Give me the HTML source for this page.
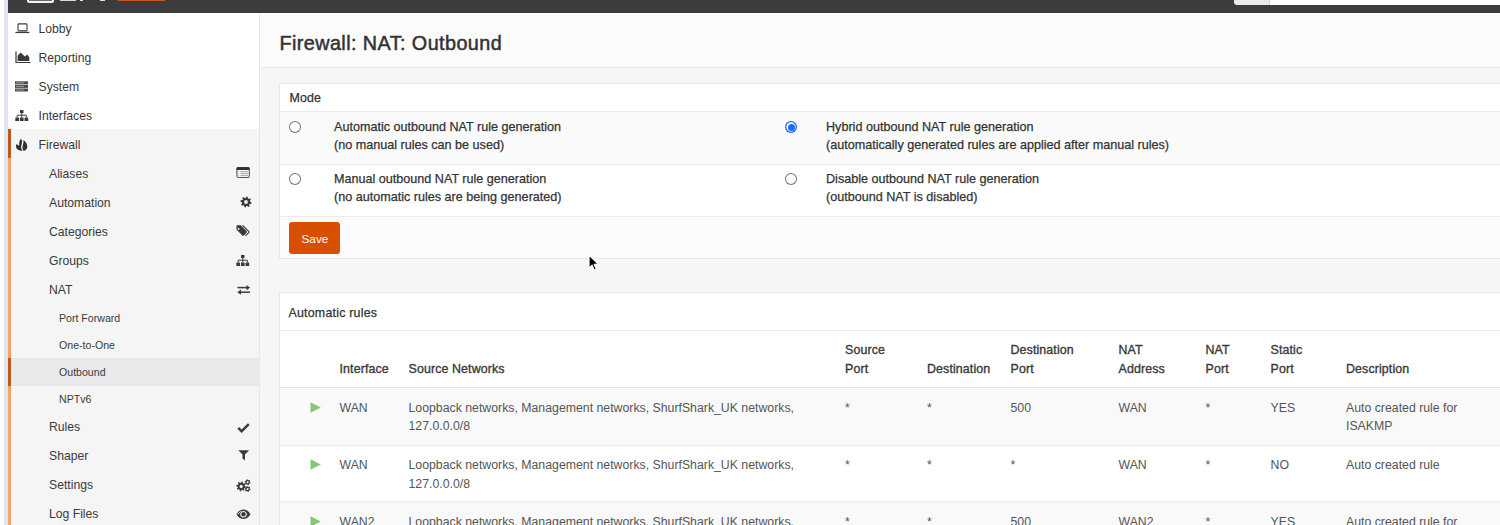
<!DOCTYPE html>
<html><head><meta charset="utf-8"><style>
html,body{margin:0;padding:0;width:1500px;height:525px;overflow:hidden;background:#fff;}
body{position:relative;font-family:"Liberation Sans",sans-serif;}
.t{position:absolute;white-space:nowrap;}
.r{position:absolute;}
</style></head><body>
<div class="r" style="left:0px;top:0px;width:1500px;height:525px;background:#fff;"></div>
<div class="r" style="left:3.5px;top:0px;width:4.5px;height:525px;background:#dde5ee;"></div>
<div class="r" style="left:260px;top:12px;width:1240px;height:55px;background:#fbfbfb;"></div>
<div class="r" style="left:260px;top:67px;width:1240px;height:1px;background:#ebebeb;"></div>
<div class="r" style="left:260px;top:68px;width:1240px;height:457px;background:#f6f6f6;"></div>
<div class="r" style="left:259px;top:12px;width:1px;height:513px;background:#e6e6e6;"></div>
<div class="r" style="left:8px;top:0px;width:1492px;height:12.6px;background:#3c3c3c;"></div>
<div class="r" style="left:27px;top:0px;width:27px;height:2.5px;background:#f2f2f2;border-radius:0 0 2px 2px;"></div>
<div class="r" style="left:29px;top:0px;width:23px;height:1px;background:#6a6a6a;"></div>
<div class="r" style="left:60px;top:0px;width:16px;height:1.2px;background:#d8d8d8;"></div>
<div class="r" style="left:80px;top:0px;width:3px;height:1.2px;background:#e0e0e0;"></div>
<div class="r" style="left:100px;top:0px;width:5px;height:1.2px;background:#e0e0e0;"></div>
<div class="r" style="left:118px;top:0px;width:47px;height:1.2px;background:#c85a20;"></div>
<div class="r" style="left:1233.5px;top:0px;width:36px;height:4.5px;background:#ebebeb;border-radius:0 0 0 3px;"></div>
<div class="r" style="left:1269.5px;top:0px;width:230.5px;height:4.5px;background:#ffffff;"></div>
<div class="r" style="left:1269px;top:0px;width:0.8px;height:4.5px;background:#cfcfcf;"></div>
<div class="r" style="left:8px;top:129px;width:251px;height:396px;background:#f5f5f5;"></div>
<div class="r" style="left:8px;top:129px;width:3px;height:29px;background:#c4561c;"></div>
<div class="r" style="left:8px;top:158px;width:3px;height:367px;background:#f4a36b;"></div>
<div class="r" style="left:11px;top:358px;width:248px;height:28px;background:#e9e9e9;"></div>
<div class="r" style="left:8px;top:358px;width:3px;height:28px;background:#c4561c;"></div>
<div class="t" style="left:38.5px;top:21.95px;font-size:12.2px;line-height:14.64px;color:#3a3a3a;font-weight:normal;letter-spacing:0px;">Lobby</div>
<div class="t" style="left:38.5px;top:50.95px;font-size:12.2px;line-height:14.64px;color:#3a3a3a;font-weight:normal;letter-spacing:0px;">Reporting</div>
<div class="t" style="left:38.5px;top:79.95px;font-size:12.2px;line-height:14.64px;color:#3a3a3a;font-weight:normal;letter-spacing:0px;">System</div>
<div class="t" style="left:38.5px;top:108.95px;font-size:12.2px;line-height:14.64px;color:#3a3a3a;font-weight:normal;letter-spacing:0px;">Interfaces</div>
<div class="t" style="left:38.5px;top:137.95px;font-size:12.2px;line-height:14.64px;color:#3a3a3a;font-weight:normal;letter-spacing:0px;">Firewall</div>
<div class="t" style="left:49px;top:166.95px;font-size:12.2px;line-height:14.64px;color:#3a3a3a;font-weight:normal;letter-spacing:0px;">Aliases</div>
<div class="t" style="left:49px;top:195.95px;font-size:12.2px;line-height:14.64px;color:#3a3a3a;font-weight:normal;letter-spacing:0px;">Automation</div>
<div class="t" style="left:49px;top:224.95px;font-size:12.2px;line-height:14.64px;color:#3a3a3a;font-weight:normal;letter-spacing:0px;">Categories</div>
<div class="t" style="left:49px;top:253.95px;font-size:12.2px;line-height:14.64px;color:#3a3a3a;font-weight:normal;letter-spacing:0px;">Groups</div>
<div class="t" style="left:49px;top:282.95px;font-size:12.2px;line-height:14.64px;color:#3a3a3a;font-weight:normal;letter-spacing:0px;">NAT</div>
<div class="t" style="left:49px;top:419.95px;font-size:12.2px;line-height:14.64px;color:#3a3a3a;font-weight:normal;letter-spacing:0px;">Rules</div>
<div class="t" style="left:49px;top:448.95px;font-size:12.2px;line-height:14.64px;color:#3a3a3a;font-weight:normal;letter-spacing:0px;">Shaper</div>
<div class="t" style="left:49px;top:478.45px;font-size:12.2px;line-height:14.64px;color:#3a3a3a;font-weight:normal;letter-spacing:0px;">Settings</div>
<div class="t" style="left:49px;top:507.45px;font-size:12.2px;line-height:14.64px;color:#3a3a3a;font-weight:normal;letter-spacing:0px;">Log Files</div>
<div class="t" style="left:59px;top:311.97px;font-size:10.6px;line-height:12.72px;color:#3a3a3a;font-weight:normal;letter-spacing:0px;">Port Forward</div>
<div class="t" style="left:59px;top:338.97px;font-size:10.6px;line-height:12.72px;color:#3a3a3a;font-weight:normal;letter-spacing:0px;">One-to-One</div>
<div class="t" style="left:59px;top:365.97px;font-size:10.6px;line-height:12.72px;color:#3a3a3a;font-weight:normal;letter-spacing:0px;">Outbound</div>
<div class="t" style="left:59px;top:392.97px;font-size:10.6px;line-height:12.72px;color:#3a3a3a;font-weight:normal;letter-spacing:0px;">NPTv6</div>
<div class="t" style="left:279.5px;top:32.06px;font-size:19.8px;line-height:23.76px;color:#333;font-weight:normal;letter-spacing:0.42px;-webkit-text-stroke:0.5px #333;">Firewall: NAT: Outbound</div>
<div class="r" style="left:279px;top:83px;width:1300px;height:176px;background:#fff;border:1px solid #e6e6e6;box-sizing:border-box;"></div>
<div class="t" style="left:289.5px;top:90.96px;font-size:12.4px;line-height:14.88px;color:#333;font-weight:normal;letter-spacing:0.1px;-webkit-text-stroke:0.25px #333;">Mode</div>
<div class="r" style="left:280px;top:111px;width:1220px;height:1px;background:#ececec;"></div>
<div class="r" style="left:280px;top:112px;width:1220px;height:52px;background:#fafafa;"></div>
<div class="r" style="left:280px;top:164px;width:1220px;height:1px;background:#ececec;"></div>
<div class="r" style="left:280px;top:216px;width:1220px;height:1px;background:#ececec;"></div>
<div class="r" style="left:280px;top:217px;width:1220px;height:41px;background:#fbfbfb;"></div>
<div class="t" style="left:334px;top:119.57px;font-size:12.6px;line-height:15.12px;color:#333;font-weight:normal;letter-spacing:0px;-webkit-text-stroke:0.25px #333;">Automatic outbound NAT rule generation</div>
<div class="t" style="left:334px;top:137.57px;font-size:12.6px;line-height:15.12px;color:#333;font-weight:normal;letter-spacing:0px;-webkit-text-stroke:0.25px #333;">(no manual rules can be used)</div>
<div class="t" style="left:826px;top:119.57px;font-size:12.6px;line-height:15.12px;color:#333;font-weight:normal;letter-spacing:0px;-webkit-text-stroke:0.25px #333;">Hybrid outbound NAT rule generation</div>
<div class="t" style="left:826px;top:137.57px;font-size:12.6px;line-height:15.12px;color:#333;font-weight:normal;letter-spacing:0px;-webkit-text-stroke:0.25px #333;">(automatically generated rules are applied after manual rules)</div>
<div class="t" style="left:334px;top:171.57px;font-size:12.6px;line-height:15.12px;color:#333;font-weight:normal;letter-spacing:0px;-webkit-text-stroke:0.25px #333;">Manual outbound NAT rule generation</div>
<div class="t" style="left:334px;top:189.57px;font-size:12.6px;line-height:15.12px;color:#333;font-weight:normal;letter-spacing:0px;-webkit-text-stroke:0.25px #333;">(no automatic rules are being generated)</div>
<div class="t" style="left:826px;top:171.57px;font-size:12.6px;line-height:15.12px;color:#333;font-weight:normal;letter-spacing:0px;-webkit-text-stroke:0.25px #333;">Disable outbound NAT rule generation</div>
<div class="t" style="left:826px;top:189.57px;font-size:12.6px;line-height:15.12px;color:#333;font-weight:normal;letter-spacing:0px;-webkit-text-stroke:0.25px #333;">(outbound NAT is disabled)</div>
<div class="r" style="left:288.8px;top:120.8px;width:12.4px;height:12.4px;border-radius:50%;background:#fff;box-shadow:0 0 0 1px #767676 inset;"></div>
<div class="r" style="left:784.8px;top:120.8px;width:12.4px;height:12.4px;border-radius:50%;background:#fff;box-shadow:0 0 0 1.3px #1a6ef0 inset;"></div><div class="r" style="left:787.5px;top:123.5px;width:7px;height:7px;border-radius:50%;background:#1a6ef0;"></div>
<div class="r" style="left:288.8px;top:172.8px;width:12.4px;height:12.4px;border-radius:50%;background:#fff;box-shadow:0 0 0 1px #767676 inset;"></div>
<div class="r" style="left:784.8px;top:172.8px;width:12.4px;height:12.4px;border-radius:50%;background:#fff;box-shadow:0 0 0 1px #767676 inset;"></div>
<div class="r" style="left:289px;top:222px;width:51px;height:32px;background:#d94f00;border-radius:3px;"></div>
<div class="t" style="left:301.5px;top:231.93px;font-size:11.8px;line-height:14.16px;color:#fff;font-weight:normal;letter-spacing:0px;">Save</div>
<div class="r" style="left:279px;top:292px;width:1300px;height:300px;background:#fff;border:1px solid #e6e6e6;box-sizing:border-box;"></div>
<div class="t" style="left:288.5px;top:306.06px;font-size:12.4px;line-height:14.88px;color:#333;font-weight:normal;letter-spacing:0.22px;-webkit-text-stroke:0.25px #333;">Automatic rules</div>
<div class="r" style="left:280px;top:330px;width:1220px;height:1px;background:#ececec;"></div>
<div class="r" style="left:280px;top:387px;width:1220px;height:1px;background:#e4e4e4;"></div>
<div class="r" style="left:280px;top:388px;width:1220px;height:57px;background:#f9f9f9;"></div>
<div class="r" style="left:280px;top:445px;width:1220px;height:1px;background:#ececec;"></div>
<div class="r" style="left:280px;top:501px;width:1220px;height:1px;background:#ececec;"></div>
<div class="r" style="left:280px;top:502px;width:1220px;height:30px;background:#f9f9f9;"></div>
<div class="t" style="left:339.5px;top:361.76px;font-size:12.4px;line-height:14.88px;color:#3a3a3a;font-weight:normal;letter-spacing:0.12px;-webkit-text-stroke:0.35px #3a3a3a;">Interface</div>
<div class="t" style="left:408.5px;top:361.76px;font-size:12.4px;line-height:14.88px;color:#3a3a3a;font-weight:normal;letter-spacing:0.12px;-webkit-text-stroke:0.35px #3a3a3a;">Source Networks</div>
<div class="t" style="left:845px;top:343.26px;font-size:12.4px;line-height:14.88px;color:#3a3a3a;font-weight:normal;letter-spacing:0.12px;-webkit-text-stroke:0.35px #3a3a3a;">Source</div>
<div class="t" style="left:845px;top:361.76px;font-size:12.4px;line-height:14.88px;color:#3a3a3a;font-weight:normal;letter-spacing:0.12px;-webkit-text-stroke:0.35px #3a3a3a;">Port</div>
<div class="t" style="left:927px;top:361.76px;font-size:12.4px;line-height:14.88px;color:#3a3a3a;font-weight:normal;letter-spacing:0.12px;-webkit-text-stroke:0.35px #3a3a3a;">Destination</div>
<div class="t" style="left:1010.5px;top:343.26px;font-size:12.4px;line-height:14.88px;color:#3a3a3a;font-weight:normal;letter-spacing:0.12px;-webkit-text-stroke:0.35px #3a3a3a;">Destination</div>
<div class="t" style="left:1010.5px;top:361.76px;font-size:12.4px;line-height:14.88px;color:#3a3a3a;font-weight:normal;letter-spacing:0.12px;-webkit-text-stroke:0.35px #3a3a3a;">Port</div>
<div class="t" style="left:1118.5px;top:343.26px;font-size:12.4px;line-height:14.88px;color:#3a3a3a;font-weight:normal;letter-spacing:0.12px;-webkit-text-stroke:0.35px #3a3a3a;">NAT</div>
<div class="t" style="left:1118.5px;top:361.76px;font-size:12.4px;line-height:14.88px;color:#3a3a3a;font-weight:normal;letter-spacing:0.12px;-webkit-text-stroke:0.35px #3a3a3a;">Address</div>
<div class="t" style="left:1205.5px;top:343.26px;font-size:12.4px;line-height:14.88px;color:#3a3a3a;font-weight:normal;letter-spacing:0.12px;-webkit-text-stroke:0.35px #3a3a3a;">NAT</div>
<div class="t" style="left:1205.5px;top:361.76px;font-size:12.4px;line-height:14.88px;color:#3a3a3a;font-weight:normal;letter-spacing:0.12px;-webkit-text-stroke:0.35px #3a3a3a;">Port</div>
<div class="t" style="left:1270.5px;top:343.26px;font-size:12.4px;line-height:14.88px;color:#3a3a3a;font-weight:normal;letter-spacing:0.12px;-webkit-text-stroke:0.35px #3a3a3a;">Static</div>
<div class="t" style="left:1270.5px;top:361.76px;font-size:12.4px;line-height:14.88px;color:#3a3a3a;font-weight:normal;letter-spacing:0.12px;-webkit-text-stroke:0.35px #3a3a3a;">Port</div>
<div class="t" style="left:1346px;top:361.76px;font-size:12.4px;line-height:14.88px;color:#3a3a3a;font-weight:normal;letter-spacing:0.12px;-webkit-text-stroke:0.35px #3a3a3a;">Description</div>
<svg class="r" style="left:310px;top:401.9px" width="11" height="11" viewBox="0 0 11 11"><path d="M0.5 0.3 L10.8 5.5 L0.5 10.7 Z" fill="#86c771"/></svg>
<div class="t" style="left:339.5px;top:400.76px;font-size:12.3px;line-height:14.76px;color:#555;font-weight:normal;letter-spacing:0px;">WAN</div>
<div class="t" style="left:845px;top:400.76px;font-size:12.3px;line-height:14.76px;color:#555;font-weight:normal;letter-spacing:0px;">*</div>
<div class="t" style="left:927px;top:400.76px;font-size:12.3px;line-height:14.76px;color:#555;font-weight:normal;letter-spacing:0px;">*</div>
<div class="t" style="left:1010.5px;top:400.76px;font-size:12.3px;line-height:14.76px;color:#555;font-weight:normal;letter-spacing:0px;">500</div>
<div class="t" style="left:1118.5px;top:400.76px;font-size:12.3px;line-height:14.76px;color:#555;font-weight:normal;letter-spacing:0px;">WAN</div>
<div class="t" style="left:1205.5px;top:400.76px;font-size:12.3px;line-height:14.76px;color:#555;font-weight:normal;letter-spacing:0px;">*</div>
<div class="t" style="left:1270.5px;top:400.76px;font-size:12.3px;line-height:14.76px;color:#555;font-weight:normal;letter-spacing:0px;">YES</div>
<div class="t" style="left:1346px;top:400.76px;font-size:12.3px;line-height:14.76px;color:#555;font-weight:normal;letter-spacing:0px;">Auto created rule for</div>
<div class="t" style="left:408.5px;top:400.76px;font-size:12.3px;line-height:14.76px;color:#555;font-weight:normal;letter-spacing:0px;">Loopback networks, Management networks, ShurfShark_UK networks,</div>
<div class="t" style="left:408.5px;top:419.36px;font-size:12.3px;line-height:14.76px;color:#555;font-weight:normal;letter-spacing:0px;">127.0.0.0/8</div>
<div class="t" style="left:1346px;top:419.36px;font-size:12.3px;line-height:14.76px;color:#555;font-weight:normal;letter-spacing:0px;">ISAKMP</div>
<svg class="r" style="left:310px;top:459.3px" width="11" height="11" viewBox="0 0 11 11"><path d="M0.5 0.3 L10.8 5.5 L0.5 10.7 Z" fill="#86c771"/></svg>
<div class="t" style="left:339.5px;top:458.16px;font-size:12.3px;line-height:14.76px;color:#555;font-weight:normal;letter-spacing:0px;">WAN</div>
<div class="t" style="left:845px;top:458.16px;font-size:12.3px;line-height:14.76px;color:#555;font-weight:normal;letter-spacing:0px;">*</div>
<div class="t" style="left:927px;top:458.16px;font-size:12.3px;line-height:14.76px;color:#555;font-weight:normal;letter-spacing:0px;">*</div>
<div class="t" style="left:1010.5px;top:458.16px;font-size:12.3px;line-height:14.76px;color:#555;font-weight:normal;letter-spacing:0px;">*</div>
<div class="t" style="left:1118.5px;top:458.16px;font-size:12.3px;line-height:14.76px;color:#555;font-weight:normal;letter-spacing:0px;">WAN</div>
<div class="t" style="left:1205.5px;top:458.16px;font-size:12.3px;line-height:14.76px;color:#555;font-weight:normal;letter-spacing:0px;">*</div>
<div class="t" style="left:1270.5px;top:458.16px;font-size:12.3px;line-height:14.76px;color:#555;font-weight:normal;letter-spacing:0px;">NO</div>
<div class="t" style="left:1346px;top:458.16px;font-size:12.3px;line-height:14.76px;color:#555;font-weight:normal;letter-spacing:0px;">Auto created rule</div>
<div class="t" style="left:408.5px;top:458.16px;font-size:12.3px;line-height:14.76px;color:#555;font-weight:normal;letter-spacing:0px;">Loopback networks, Management networks, ShurfShark_UK networks,</div>
<div class="t" style="left:408.5px;top:476.76px;font-size:12.3px;line-height:14.76px;color:#555;font-weight:normal;letter-spacing:0px;">127.0.0.0/8</div>
<svg class="r" style="left:310px;top:516.0px" width="11" height="11" viewBox="0 0 11 11"><path d="M0.5 0.3 L10.8 5.5 L0.5 10.7 Z" fill="#86c771"/></svg>
<div class="t" style="left:339.5px;top:514.86px;font-size:12.3px;line-height:14.76px;color:#555;font-weight:normal;letter-spacing:0px;">WAN2</div>
<div class="t" style="left:845px;top:514.86px;font-size:12.3px;line-height:14.76px;color:#555;font-weight:normal;letter-spacing:0px;">*</div>
<div class="t" style="left:927px;top:514.86px;font-size:12.3px;line-height:14.76px;color:#555;font-weight:normal;letter-spacing:0px;">*</div>
<div class="t" style="left:1010.5px;top:514.86px;font-size:12.3px;line-height:14.76px;color:#555;font-weight:normal;letter-spacing:0px;">500</div>
<div class="t" style="left:1118.5px;top:514.86px;font-size:12.3px;line-height:14.76px;color:#555;font-weight:normal;letter-spacing:0px;">WAN2</div>
<div class="t" style="left:1205.5px;top:514.86px;font-size:12.3px;line-height:14.76px;color:#555;font-weight:normal;letter-spacing:0px;">*</div>
<div class="t" style="left:1270.5px;top:514.86px;font-size:12.3px;line-height:14.76px;color:#555;font-weight:normal;letter-spacing:0px;">YES</div>
<div class="t" style="left:1346px;top:514.86px;font-size:12.3px;line-height:14.76px;color:#555;font-weight:normal;letter-spacing:0px;">Auto created rule for</div>
<div class="t" style="left:408.5px;top:514.86px;font-size:12.3px;line-height:14.76px;color:#555;font-weight:normal;letter-spacing:0px;">Loopback networks, Management networks, ShurfShark_UK networks,</div>
<div class="t" style="left:408.5px;top:533.46px;font-size:12.3px;line-height:14.76px;color:#555;font-weight:normal;letter-spacing:0px;">127.0.0.0/8</div>
<svg class="r" style="left:14.5px;top:22.5px" width="15" height="11" viewBox="0 0 15 11"><rect x="3.0" y="0.9" width="9.0" height="7.0" rx="0.9" fill="none" stroke="#3a3a3a" stroke-width="1.1"/><rect x="0.4" y="8.8" width="14" height="1.3" fill="#3a3a3a"/></svg>
<svg class="r" style="left:14.5px;top:50.5px" width="16" height="12.5" viewBox="0 0 16 12.5"><path d="M1 0.5 V11.6 H15.5" fill="none" stroke="#3a3a3a" stroke-width="1.2"/><path d="M2.6 10 V4.8 L5.6 1.6 L9.9 5.6 L12.3 3.4 L14.3 6.2 V10 Z" fill="#3a3a3a"/></svg>
<svg class="r" style="left:15px;top:80.5px" width="13" height="11" viewBox="0 0 13 11"><rect x="0" y="0.3" width="13" height="3" fill="#4a4a4a"/><rect x="0" y="3.9" width="13" height="3" fill="#4a4a4a"/><rect x="0" y="7.5" width="13" height="3" fill="#4a4a4a"/><rect x="1" y="1.3" width="8" height="1" fill="#9a9a9a"/><rect x="1" y="4.9" width="8" height="1" fill="#9a9a9a"/><rect x="1" y="8.5" width="8" height="1" fill="#9a9a9a"/></svg>
<svg class="r" style="left:15px;top:109.5px" width="13.5" height="11.6" viewBox="0 0 13.5 11.6"><rect x="5" y="0" width="3.5" height="3" fill="#3a3a3a"/><path d="M6.75 3 V5.2 M2.2 7.5 V5.2 H11.3 V7.5 M6.75 5.2 V7.5" fill="none" stroke="#3a3a3a" stroke-width="1"/><rect x="0.3" y="7.4" width="3.7" height="4.2" rx="0.5" fill="#3a3a3a"/><rect x="4.9" y="7.4" width="3.7" height="4.2" rx="0.5" fill="#3a3a3a"/><rect x="9.5" y="7.4" width="3.7" height="4.2" rx="0.5" fill="#3a3a3a"/></svg>
<svg class="r" style="left:13px;top:135px" width="18" height="18" viewBox="0 0 18 18"><path d="M7.9 3.7 C9.3 5 9.4 7.3 8.6 9.4 C7.9 11.2 7.6 13.6 9.6 15.8 C6.2 15.9 3.2 14.5 3 11.6 C2.9 10.4 3.3 9.6 3.9 9.1 C4.3 10 5.2 10.6 6.3 10.6 C6 8.6 6 6.2 7.9 3.7 Z" fill="#352a2b"/><path d="M10.3 5.1 C12.6 6.4 14.3 8.8 14.3 11.6 C14.3 13.8 12.9 15.3 10.9 15.9 C9.6 14.6 9.1 12.8 9.6 11.2 C10.1 9.6 10.8 7.6 10.3 5.1 Z" fill="#303230"/></svg>
<svg class="r" style="left:236px;top:167px" width="14" height="11" viewBox="0 0 14 11"><rect x="0.9" y="0.5" width="12.4" height="10.1" rx="1.4" fill="#fafafa" stroke="#444" stroke-width="1"/><rect x="0.5" y="0.2" width="13.2" height="2.8" rx="1" fill="#2e2e2e"/><path d="M2 4.6 H3.2 M2 6.6 H3.2 M2 8.6 H3.2" stroke="#bbb" stroke-width="0.9"/><path d="M4.4 4.6 H12 M4.4 6.6 H12 M4.4 8.6 H12" stroke="#999" stroke-width="0.9"/></svg>
<svg class="r" style="left:239.5px;top:195.5px" width="12" height="12" viewBox="0 0 12 12"><path d="M11.57 6.55 L11.36 7.63 L9.62 7.93 L9.17 8.60 L9.55 10.33 L8.64 10.94 L7.19 9.92 L6.40 10.08 L5.45 11.57 L4.37 11.36 L4.07 9.62 L3.40 9.17 L1.67 9.55 L1.06 8.64 L2.08 7.19 L1.92 6.40 L0.43 5.45 L0.64 4.37 L2.38 4.07 L2.83 3.40 L2.45 1.67 L3.36 1.06 L4.81 2.08 L5.60 1.92 L6.55 0.43 L7.63 0.64 L7.93 2.38 L8.60 2.83 L10.33 2.45 L10.94 3.36 L9.92 4.81 L10.08 5.60 Z M7.90 6.00 A1.9 1.9 0 1 0 4.10 6.00 A1.9 1.9 0 1 0 7.90 6.00 Z" fill="#3a3a3a" fill-rule="evenodd"/></svg>
<svg class="r" style="left:235.5px;top:225px" width="15" height="12" viewBox="0 0 15 12"><path d="M0.5 1.3 V4.6 L6.3 10.4 C6.8 10.9 7.4 10.9 7.9 10.4 L10.6 7.7 C11.1 7.2 11.1 6.6 10.6 6.1 L4.8 0.3 H1.5 C0.9 0.3 0.5 0.7 0.5 1.3 Z M2.6 2.9 A0.9 0.9 0 1 0 2.61 2.9 Z" fill="#3a3a3a" fill-rule="evenodd"/><path d="M6.6 0.3 L12.7 6.4 C13.1 6.8 13.1 7.2 12.7 7.6 L9.5 10.8" fill="none" stroke="#3a3a3a" stroke-width="1.1"/></svg>
<svg class="r" style="left:236px;top:254.5px" width="13.5" height="11.6" viewBox="0 0 13.5 11.6"><rect x="5" y="0" width="3.5" height="3" fill="#3a3a3a"/><path d="M6.75 3 V5.2 M2.2 7.5 V5.2 H11.3 V7.5 M6.75 5.2 V7.5" fill="none" stroke="#3a3a3a" stroke-width="1"/><rect x="0.3" y="7.4" width="3.7" height="4.2" rx="0.5" fill="#3a3a3a"/><rect x="4.9" y="7.4" width="3.7" height="4.2" rx="0.5" fill="#3a3a3a"/><rect x="9.5" y="7.4" width="3.7" height="4.2" rx="0.5" fill="#3a3a3a"/></svg>
<svg class="r" style="left:236.5px;top:284.5px" width="13.5" height="10" viewBox="0 0 13.5 10"><path d="M0.5 2.6 H10" stroke="#3a3a3a" stroke-width="1.5"/><path d="M9.5 0 L13.2 2.6 L9.5 5.2 Z" fill="#3a3a3a"/><path d="M3.5 7.2 H13" stroke="#3a3a3a" stroke-width="1.5"/><path d="M4 4.6 L0.3 7.2 L4 9.8 Z" fill="#3a3a3a"/></svg>
<svg class="r" style="left:236.5px;top:422.5px" width="13" height="10" viewBox="0 0 13 10"><path d="M1.2 4.8 L4.6 8.2 L11.8 1.2" fill="none" stroke="#3a3a3a" stroke-width="2.4"/></svg>
<svg class="r" style="left:237.5px;top:450px" width="12" height="11" viewBox="0 0 12 11"><path d="M0.3 0.3 H11.2 L7 4.6 V10.6 L4.5 8.6 V4.6 Z" fill="#3a3a3a"/></svg>
<svg class="r" style="left:235.5px;top:478.5px" width="15" height="13" viewBox="0 0 15 13"><path d="M10.18 7.89 L9.98 8.85 L8.37 9.10 L7.98 9.68 L8.37 11.27 L7.56 11.81 L6.25 10.84 L5.55 10.98 L4.71 12.38 L3.75 12.18 L3.50 10.57 L2.92 10.18 L1.33 10.57 L0.79 9.76 L1.76 8.45 L1.62 7.75 L0.22 6.91 L0.42 5.95 L2.03 5.70 L2.42 5.12 L2.03 3.53 L2.84 2.99 L4.15 3.96 L4.85 3.82 L5.69 2.42 L6.65 2.62 L6.90 4.23 L7.48 4.62 L9.07 4.23 L9.61 5.04 L8.64 6.35 L8.78 7.05 Z M6.80 7.40 A1.6 1.6 0 1 0 3.60 7.40 A1.6 1.6 0 1 0 6.80 7.40 Z" fill="#3a3a3a" fill-rule="evenodd"/><path d="M14.57 3.59 L14.37 4.35 L13.35 4.54 L12.94 4.95 L12.75 5.97 L11.99 6.17 L11.31 5.38 L10.76 5.23 L9.77 5.58 L9.22 5.03 L9.57 4.04 L9.42 3.49 L8.63 2.81 L8.83 2.05 L9.85 1.86 L10.26 1.45 L10.45 0.43 L11.21 0.23 L11.89 1.02 L12.44 1.17 L13.43 0.82 L13.98 1.37 L13.63 2.36 L13.78 2.91 Z M12.60 3.20 A1.0 1.0 0 1 0 10.60 3.20 A1.0 1.0 0 1 0 12.60 3.20 Z" fill="#3a3a3a" fill-rule="evenodd"/><path d="M14.57 10.39 L14.37 11.15 L13.35 11.34 L12.94 11.75 L12.75 12.77 L11.99 12.97 L11.31 12.18 L10.76 12.03 L9.77 12.38 L9.22 11.83 L9.57 10.84 L9.42 10.29 L8.63 9.61 L8.83 8.85 L9.85 8.66 L10.26 8.25 L10.45 7.23 L11.21 7.03 L11.89 7.82 L12.44 7.97 L13.43 7.62 L13.98 8.17 L13.63 9.16 L13.78 9.71 Z M12.60 10.00 A1.0 1.0 0 1 0 10.60 10.00 A1.0 1.0 0 1 0 12.60 10.00 Z" fill="#3a3a3a" fill-rule="evenodd"/></svg>
<svg class="r" style="left:235.5px;top:509px" width="15" height="11" viewBox="0 0 15 11"><path d="M0.5 5.3 C2.5 1.8 5 0.5 7.5 0.5 C10 0.5 12.5 1.8 14.5 5.3 C12.5 8.8 10 10.1 7.5 10.1 C5 10.1 2.5 8.8 0.5 5.3 Z M7.5 2 A3.3 3.3 0 1 0 7.51 2 Z" fill="#3a3a3a" fill-rule="evenodd"/><circle cx="7.5" cy="5.3" r="2.2" fill="#3a3a3a"/><path d="M2 5.3 C3.3 3.2 4.5 2.5 5.5 2.2" stroke="#f5f5f5" stroke-width="0.9" fill="none"/></svg>
<svg class="r" style="left:586px;top:252px" width="14" height="19" viewBox="0 0 14 19"><path d="M3 3 V16.2 L6.1 13.2 L8.3 18 L10.4 17 L8.3 12.4 H12.5 Z" fill="#000" stroke="#fff" stroke-width="1.2" stroke-linejoin="round"/></svg>

</body></html>
